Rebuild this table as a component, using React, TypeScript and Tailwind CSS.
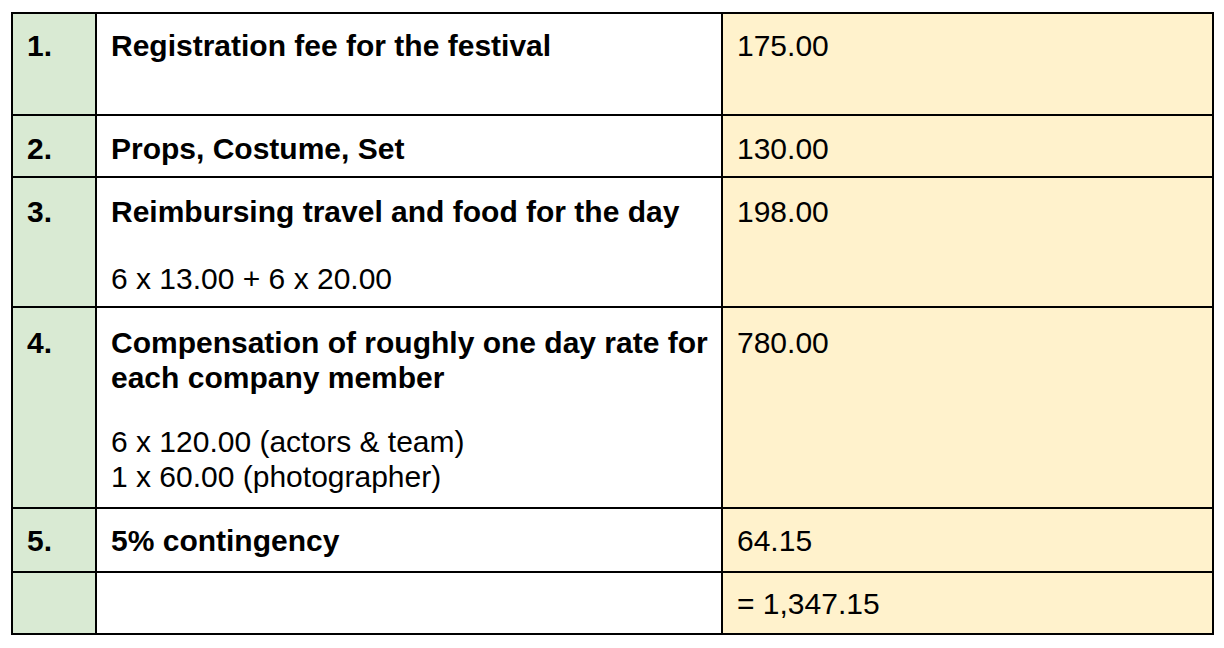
import React from "react";

type Row = {
  num: string;
  h: number;
  pt: number;
  lines: React.ReactNode;
  amount: string;
};

const Spacer = ({ h }: { h: number }) => <div style={{ height: h }} />;

const rows: Row[] = [
  {
    num: "1.",
    h: 100,
    pt: 15,
    lines: <div className="font-bold">Registration fee for the festival</div>,
    amount: "175.00",
  },
  {
    num: "2.",
    h: 60,
    pt: 16,
    lines: <div className="font-bold">Props, Costume, Set</div>,
    amount: "130.00",
  },
  {
    num: "3.",
    h: 128,
    pt: 17,
    lines: (
      <>
        <div className="font-bold">Reimbursing travel and food for the day</div>
        <Spacer h={32} />
        <div>6 x 13.00 + 6 x 20.00</div>
      </>
    ),
    amount: "198.00",
  },
  {
    num: "4.",
    h: 199,
    pt: 18,
    lines: (
      <>
        <div className="font-bold">
          Compensation of roughly one day rate for
          <br />
          each company member
        </div>
        <Spacer h={30} />
        <div>
          6 x 120.00 (actors &amp; team)
          <br />1 x 60.00 (photographer)
        </div>
      </>
    ),
    amount: "780.00",
  },
  {
    num: "5.",
    h: 62,
    pt: 15,
    lines: <div className="font-bold">5% contingency</div>,
    amount: "64.15",
  },
  {
    num: "",
    h: 60,
    pt: 14,
    lines: null,
    amount: "= 1,347.15",
  },
];

export default function App() {
  return (
    <div
      className="min-h-[648px] w-[1224px] bg-white pl-[11px] pt-[12px] text-black"
      style={{ fontFamily: '"Liberation Sans", Arial, sans-serif' }}
    >
      <div className="grid w-[1203px] grid-cols-[84px_626px_491px] border-l-2 border-t-2 border-black text-[30px] leading-[34.5px]">
        {rows.map((r, i) => (
          <React.Fragment key={i}>
            <div
              className="border-b-2 border-r-2 border-black bg-[#d9ead3] px-[14px] font-bold"
              style={{ height: r.h + 2, paddingTop: r.pt }}
            >
              {r.num}
            </div>
            <div
              className="overflow-hidden whitespace-nowrap border-b-2 border-r-2 border-black bg-white px-[14px]"
              style={{ height: r.h + 2, paddingTop: r.pt }}
            >
              {r.lines}
            </div>
            <div
              className="border-b-2 border-r-2 border-black bg-[#fff2cc] px-[14px]"
              style={{ height: r.h + 2, paddingTop: r.pt }}
            >
              {r.amount}
            </div>
          </React.Fragment>
        ))}
      </div>
    </div>
  );
}
